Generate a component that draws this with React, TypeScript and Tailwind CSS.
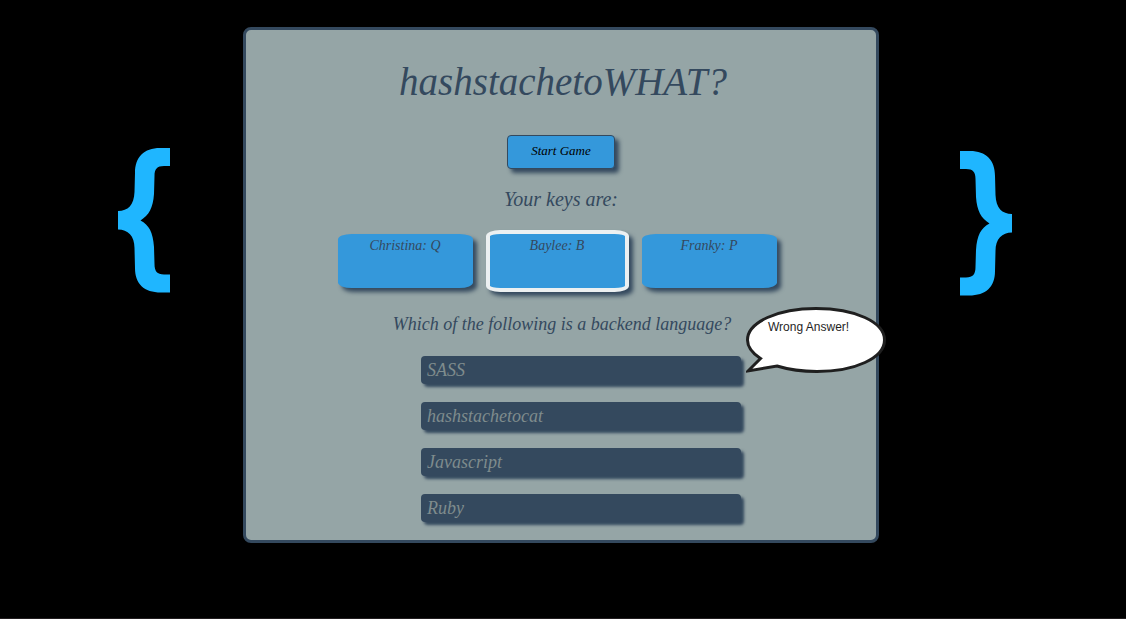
const players = [
  { name: 'Christina', key: 'Q', active: false },
  { name: 'Baylee', key: 'B', active: true },
  { name: 'Franky', key: 'P', active: false },
];

const answers = ['SASS', 'hashstachetocat', 'Javascript', 'Ruby'];

function Brace({ className = '' }: { className?: string }) {
  return (
    <svg viewBox="0 0 52 145" className={`h-[145px] w-[52px] shrink-0 ${className}`} aria-hidden="true">
      <path
        d="M52 0H42C26 0 17 9 17 25L16.500 44C16 57 10 63 0 63V81.500C10 81.500 16.500 88 16.500 100L17 120C17 136 26 144.500 43 144.500H52V126.500H46C39 126.500 36.500 123 36.500 116L36 99C35 84 31 77 22.500 72.500C31 67 35 60 36 46L36.500 28C36.500 21 39 18 46 18H52Z"
        fill="#1fb6ff"
      />
    </svg>
  );
}

function SpeechBubble() {
  return (
    <div className="absolute top-[277px] left-[500px] h-[67px] w-[140px]" role="status">
      <svg viewBox="0 0 140 67" className="absolute inset-0 h-full w-full" aria-hidden="true">
        <path
          d="M31 59C44 63 57 64.500 71 64.500C109 64.500 138.500 51 138.500 33C138.500 15 109 1.500 70 1.500C32 1.500 1.500 15 1.500 33C1.500 40 6 46 14.500 51.500L2 64Z"
          fill="#ffffff"
          stroke="#1f1f1f"
          strokeWidth="3"
        />
      </svg>
      <p className="relative px-[22px] pt-3 font-['Liberation_Sans',Arial,sans-serif] text-xs leading-4 whitespace-nowrap text-[#1f1f1f] not-italic">
        Wrong Answer!
      </p>
    </div>
  );
}

export default function App() {
  return (
    <div className="flex min-h-screen flex-col justify-between bg-black">
      <div className="grid grid-cols-[243fr_minmax(auto,636px)_247fr] items-start pt-[27px]">
        <div className="flex justify-end pt-[121px] pr-[73px]">
          <Brace />
        </div>

        <main className="relative flex flex-col items-center rounded-lg border-3 border-[#34495e] bg-[#95a5a6] pb-[18px] font-['Apple_Chancery','Liberation_Serif',serif] text-[#34495e] italic">
          <h1 className="pt-7 pl-1 text-[39px] leading-[48px]">hashstachetoWHAT?</h1>

          <button
            type="button"
            className="mt-[29px] h-[34px] w-[108px] rounded border border-[#34495e] bg-[#3498db] pb-[2px] text-[13px] leading-4 text-black italic shadow-[4px_4px_4px_#34495e]"
          >
            Start Game
          </button>

          <h2 className="mt-[18px] text-[20px] leading-6">Your keys are:</h2>

          <ul className="mt-[23px] mr-2 flex gap-[17px] text-center text-[14px] leading-6">
            {players.map((player) => (
              <li
                key={player.name}
                className={
                  player.active
                    ? '-m-1 h-[62px] w-[143px] rounded-[10%] border-4 border-[#ecf0f1] bg-[#3498db] shadow-[4px_4px_4px_#34495e]'
                    : 'h-[54px] w-[135px] rounded-[10%] bg-[#3498db] shadow-[4px_4px_4px_#34495e]'
                }
              >
                {player.name}: {player.key}
              </li>
            ))}
          </ul>

          <p className="mt-6 pl-[2px] text-[18px] leading-6">Which of the following is a backend language?</p>

          <ul className="mt-5 ml-10 flex w-[320px] flex-col gap-[18px]">
            {answers.map((answer) => (
              <li key={answer} className="flex">
                <button
                  type="button"
                  className="h-7 w-full rounded bg-[#34495e] px-[6px] text-left text-[18px] leading-7 text-[#7f8c8d] italic shadow-[3px_3px_3px_#34495e]"
                >
                  {answer}
                </button>
              </li>
            ))}
          </ul>

          <SpeechBubble />
        </main>

        <div className="flex pt-[124px] pl-[81px]">
          <Brace className="-scale-x-100" />
        </div>
      </div>
      <footer className="h-px bg-[#211d1f]" />
    </div>
  );
}
